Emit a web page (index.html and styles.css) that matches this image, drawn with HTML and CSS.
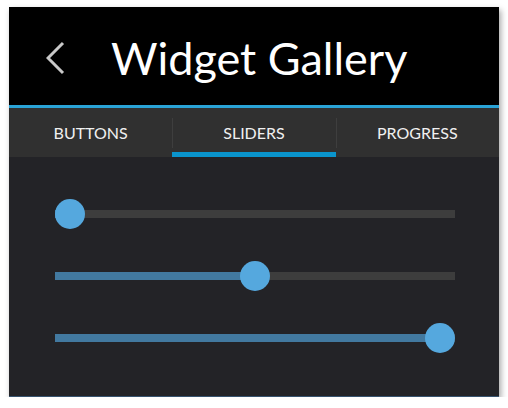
FILE: index.html
```html
<!DOCTYPE html>
<html>
<head>
<meta charset="utf-8">
<link rel="stylesheet" href="styles.css">
</head>
<body>
<div class="frame">
  <header class="header">
    <svg class="back" width="20" height="34" viewBox="0 0 20 34">
      <polyline points="17,2 2,17 17,32" fill="none" stroke="#c9c9c9" stroke-width="3"/>
    </svg>
    <h1 class="title">Widget Gallery</h1>
  </header>
  <nav class="tabs">
    <div class="tab">BUTTONS</div>
    <div class="tab sep active">SLIDERS</div>
    <div class="tab sep">PROGRESS</div>
  </nav>
  <main class="content">
    <div class="slider" style="--v:0"><div class="track"><div class="fill"></div></div><div class="thumb"></div></div>
    <div class="slider" style="--v:0.5"><div class="track"><div class="fill"></div></div><div class="thumb"></div></div>
    <div class="slider" style="--v:1"><div class="track"><div class="fill"></div></div><div class="thumb"></div></div>
  </main>
</div>
</body>
</html>
```
FILE: styles.css
```css
html, body {
  margin: 0;
  padding: 0;
  background: #ffffff;
}
body {
  font-family: "Lato", "Open Sans", sans-serif;
}
.frame {
  margin: 7px 0 0 9px;
  width: 490px;
  height: 390px;
  display: flex;
  flex-direction: column;
  background: #232327;
  box-shadow: 2px 3px 6px rgba(0, 0, 0, 0.35);
}
.header {
  height: 101px;
  background: #000;
  border-bottom: 3px solid #2aa3d6;
  display: flex;
  align-items: center;
  padding-left: 37px;
  padding-top: 4px;
  box-sizing: border-box;
  flex: none;
}
.back {
  display: block;
  flex: none;
}
.title {
  margin: 0 0 0 45px;
  font-size: 45px;
  font-weight: normal;
  color: #fff;
  line-height: 1;
}
.tabs {
  height: 49px;
  flex: none;
  background: #303030;
  display: grid;
  grid-template-columns: 1fr 1fr 1fr;
}
.tab {
  position: relative;
  display: flex;
  align-items: center;
  justify-content: center;
  color: #f0f0f0;
  font-size: 16px;
}
.tab.sep::before {
  content: "";
  position: absolute;
  left: 0;
  top: 10px;
  height: 30px;
  width: 1px;
  background: #3e3e3e;
}
.tab.active {
  box-shadow: inset 0 -5px #0a94cc;
}
.content {
  flex: 1;
  display: flex;
  flex-direction: column;
  gap: 32px;
  padding: 42px 44px 0 46px;
  border-bottom: 1px solid #37536f;
}
.slider {
  position: relative;
  height: 30px;
  display: flex;
  align-items: center;
}
.track {
  flex: 1;
  height: 8px;
  background: #3d3d3d;
}
.fill {
  height: 100%;
  width: calc(15px + var(--v) * 370px);
  background: #4279a0;
}
.thumb {
  position: absolute;
  top: 0;
  left: calc(var(--v) * 370px);
  width: 30px;
  height: 30px;
  border-radius: 50%;
  background: #55a8de;
}
```
